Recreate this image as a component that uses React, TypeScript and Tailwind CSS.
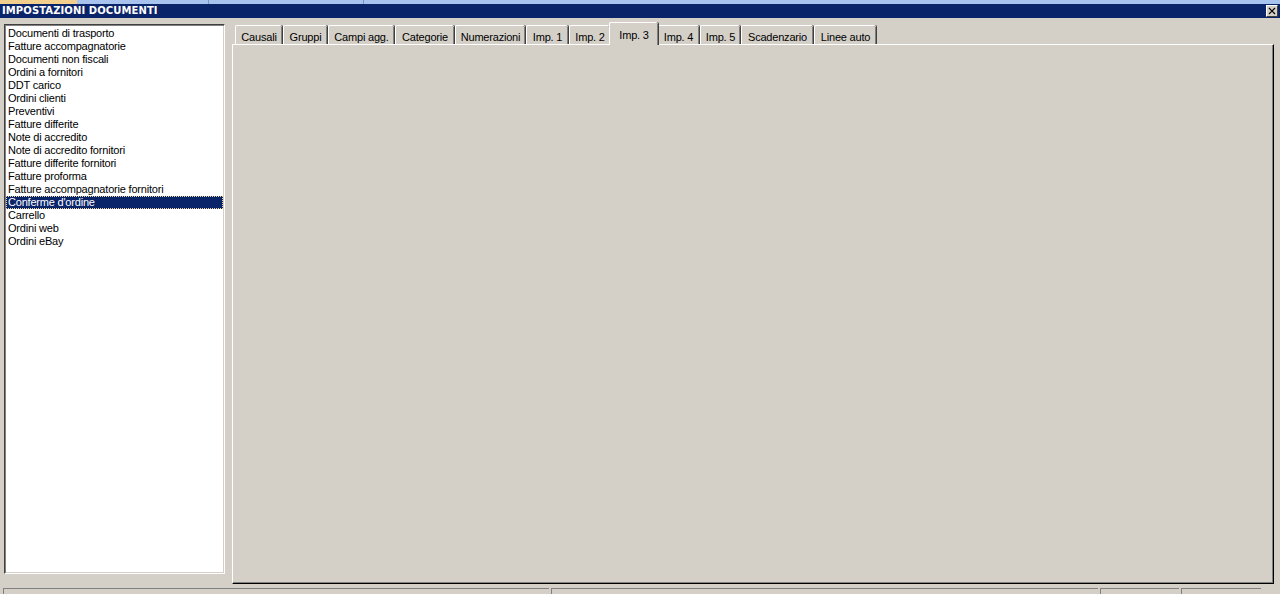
import React from 'react'

const docs = [
  'Documenti di trasporto',
  'Fatture accompagnatorie',
  'Documenti non fiscali',
  'Ordini a fornitori',
  'DDT carico',
  'Ordini clienti',
  'Preventivi',
  'Fatture differite',
  'Note di accredito',
  'Note di accredito fornitori',
  'Fatture differite fornitori',
  'Fatture proforma',
  'Fatture accompagnatorie fornitori',
  "Conferme d'ordine",
  'Carrello',
  'Ordini web',
  'Ordini eBay',
]

const tabs: Array<{ label: string; w: string }> = [
  { label: 'Causali', w: 'w-[47px]' },
  { label: 'Gruppi', w: 'w-[44px]' },
  { label: 'Campi agg.', w: 'w-[66px]' },
  { label: 'Categorie', w: 'w-[59px]' },
  { label: 'Numerazioni', w: 'w-[70px]' },
  { label: 'Imp. 1', w: 'w-[42px]' },
  { label: 'Imp. 2', w: 'w-[41px]' },
  { label: 'Imp. 3', w: 'w-[49px]' },
  { label: 'Imp. 4', w: 'w-[42px]' },
  { label: 'Imp. 5', w: 'w-[40px]' },
  { label: 'Scadenzario', w: 'w-[72px]' },
  { label: 'Linee auto', w: 'w-[62px]' },
]

const Tab = ({ label, w, active }: { label: string; w: string; active: boolean }) => {
  if (active) {
    return (
      <div
        className={`${w} relative z-10 -mx-[2px] -mb-[1px] flex h-[23px] items-start justify-center rounded-t-[2px] border-t border-l border-white bg-[#d4d0c8] pt-[4px] shadow-[inset_-1px_0_0_#808080,1px_0_0_#404040]`}
      >
        {label}
      </div>
    )
  }
  return (
    <div
      className={`${w} flex h-[19px] items-start justify-center rounded-t-[2px] border-t border-l border-white bg-[#d4d0c8] pt-[3px] shadow-[inset_-1px_0_0_#808080,1px_0_0_#404040]`}
    >
      {label}
    </div>
  )
}

export default function App() {
  return (
    <div className="flex h-[594px] w-[1280px] flex-col overflow-hidden bg-[#d4d0c8] font-['Liberation_Sans',Arial,sans-serif] text-[11px] tracking-[-0.2px] text-black">
      <div className="flex h-[4px] bg-[#a8c4ee]">
        <div className="w-[77px] bg-[#f2cf8c]" />
        <div className="w-[131px]" />
        <div className="w-[1px] bg-[#7a96c8]" />
        <div className="w-[154px]" />
        <div className="w-[1px] bg-[#7a96c8]" />
      </div>
      <div className="flex h-[14px] items-center justify-between bg-[#0a246a] pl-[2px] pr-[2px]">
        <span className="font-['DejaVu_Sans',Verdana,sans-serif] text-[10px] leading-none font-bold tracking-[0.1px] text-white">
          IMPOSTAZIONI DOCUMENTI
        </span>
        <div className="flex h-[12px] w-[12px] items-center justify-center border border-t-white border-l-white border-r-[#404040] border-b-[#404040] bg-[#d4d0c8]">
          <svg width="8" height="8" viewBox="0 0 8 8">
            <path d="M1 1 L7 7 M7 1 L1 7" stroke="#000" strokeWidth="1.2" />
          </svg>
        </div>
      </div>
      <div className="flex flex-1 pt-[5px] pl-[4px]">
        <div className="mt-[1px] h-[550px] w-[221px] border border-t-[#404040] border-l-[#404040] border-r-white border-b-white bg-white pt-[2px] pr-[1px] pl-[1px] shadow-[inset_1px_1px_0_#808080,inset_-1px_-1px_0_#d4d0c8]">
          {docs.map((d) => {
            const sel = d === "Conferme d'ordine"
            return (
              <div
                key={d}
                className={
                  sel
                    ? 'h-[13px] border border-dotted border-[#f0d8a0] bg-[#0a246a] pl-[1px] leading-[11px] text-white'
                    : 'h-[13px] pl-[2px] leading-[13px]'
                }
              >
                {d}
              </div>
            )
          })}
        </div>
        <div className="ml-[7px] flex w-[1042px] flex-col">
          <div className="flex h-[21px] items-end gap-[1px] pl-[3px]">
            {tabs.map((t) => (
              <Tab key={t.label} label={t.label} w={t.w} active={t.label === 'Imp. 3'} />
            ))}
          </div>
          <div className="h-[540px] border-t border-r border-b border-l border-white border-r-[#000] border-b-[#000] bg-[#d4d0c8] shadow-[inset_-1px_-1px_0_#808080]" />
        </div>
      </div>
      <div className="flex h-[6px] gap-[2px] pl-[3px]">
        <div className="w-[546px] border-t border-l border-[#808080]" />
        <div className="w-[547px] border-t border-l border-[#808080]" />
        <div className="w-[79px] border-t border-l border-[#808080]" />
        <div className="w-[80px] border-t border-l border-[#808080]" />
      </div>
    </div>
  )
}
